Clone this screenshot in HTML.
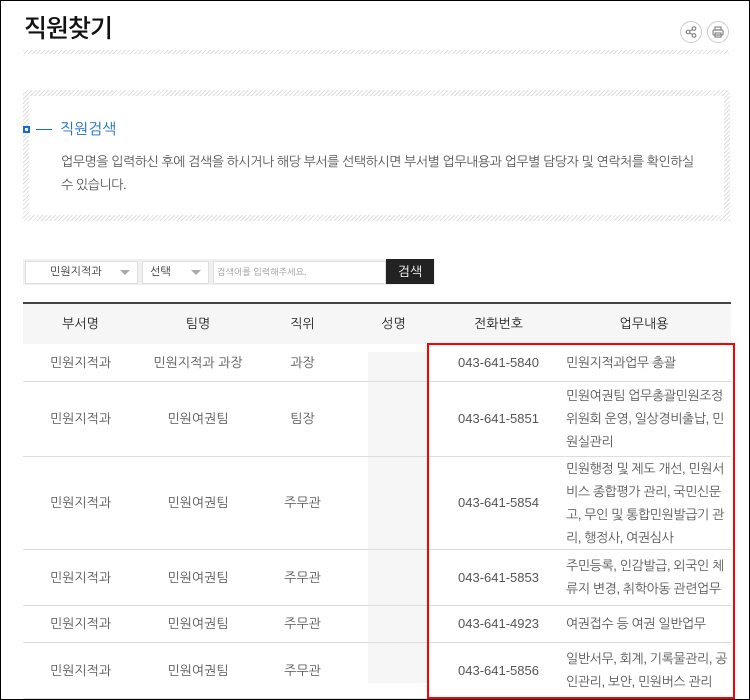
<!DOCTYPE html>
<html><head><meta charset="utf-8"><style>
*{box-sizing:border-box;margin:0;padding:0}
body{width:750px;height:700px;background:#fff;font-family:"Liberation Sans","NanumGothic","Noto Sans CJK KR",sans-serif;color:#555;position:relative;overflow:hidden}
.frame{position:absolute;left:0;top:0;width:750px;height:700px;border:1px solid #000;z-index:5;pointer-events:none}
.hatch{background:repeating-linear-gradient(135deg,#ddd 0 1px,#fff 1px 3px)}
h1{position:absolute;left:24px;top:10px;font-size:25px;font-weight:500;color:#111;letter-spacing:-1px;font-family:"Noto Sans CJK KR",sans-serif;line-height:34px}
.ic{position:absolute;top:21px;width:22px;height:22px;border:1px solid #ccc;border-radius:50%}
.line1{position:absolute;left:23px;top:50px;width:706px;height:4px}
.box{position:absolute;left:23px;top:90px;width:707px;height:131px}
.inner{position:absolute;left:6px;top:6px;right:6px;bottom:6px;background:#fff}
.tt{position:absolute;left:23px;top:120px;font-size:15px;color:#1a6bc9}
.desc{position:absolute;left:61px;top:150px;width:660px;font-size:13px;line-height:23px;color:#555;white-space:nowrap;letter-spacing:-0.45px}
.sb{position:absolute;left:23px;top:259px;width:412px;height:26px;background:#f0f0f0}
.sel{position:absolute;top:261px;height:23px;background:#fff;border:1px solid #ddd;font-size:11px;color:#333;line-height:21px}
.arr{position:absolute;right:7px;top:8px;border-left:5px solid transparent;border-right:5px solid transparent;border-top:5px solid #aaa}
table{position:absolute;left:23px;top:302px;width:708px;border-collapse:collapse;font-size:13px;table-layout:fixed}
th{height:41px;background:#f6f6f6;border-top:2px solid #444;font-weight:normal;color:#222;font-size:13px}
td{border-bottom:1px solid #ddd;text-align:center;line-height:23px;color:#555;padding:0;white-space:nowrap}
td.c{text-align:left;padding:0 0 0 9px;letter-spacing:-0.4px}
</style></head><body>
<div class="frame"></div>
<h1>직원찾기</h1>
<div class="ic" style="left:680px"><svg width="20" height="20" viewBox="0 0 20 20"><g fill="none" stroke="#888" stroke-width="1.2"><circle cx="7" cy="10" r="1.8"/><circle cx="13" cy="6.5" r="1.8"/><circle cx="13" cy="13.5" r="1.8"/><path d="M8.6 9.1l2.8-1.7M8.6 10.9l2.8 1.7"/></g></svg></div>
<div class="ic" style="left:707px"><svg width="20" height="20" viewBox="0 0 20 20"><g fill="none" stroke="#888" stroke-width="1.2"><rect x="7" y="5" width="6" height="3"/><rect x="5" y="8" width="10" height="5" rx="1"/><rect x="7" y="11" width="6" height="4"/></g></svg></div>
<div class="line1 hatch"></div>
<div class="box hatch"><div class="inner"></div></div>
<div class="tt"><span style="display:inline-block;width:7px;height:7px;border:2px solid #1a6bc9;vertical-align:1px"></span><span style="display:inline-block;width:16px;height:1px;background:#1a6bc9;vertical-align:4px;margin:0 8px 0 6px"></span>직원검색</div>
<div class="desc">업무명을 입력하신 후에 검색을 하시거나 해당 부서를 선택하시면 부서별 업무내용과 업무별 담당자 및 연락처를 확인하실<br>수 있습니다.</div>
<div class="sb"></div>
<div class="sel" style="left:25px;width:113px;padding-left:24px">민원지적과<span class="arr"></span></div>
<div class="sel" style="left:142px;width:67px;padding-left:7px">선택<span class="arr"></span></div>
<div class="sel" style="left:213px;width:173px;padding-left:3px;font-size:9px;color:#999">검색어를 입력해주세요.</div>
<div style="position:absolute;left:386px;top:259px;width:48px;height:25px;background:#222;color:#fff;font-size:13px;text-align:center;line-height:25px">검색</div>
<div style="position:absolute;left:368px;top:352px;width:60px;height:331px;background:#f6f6f6"></div>
<table>
<colgroup><col style="width:115px"><col style="width:120px"><col style="width:89px"><col style="width:93px"><col style="width:117px"><col style="width:174px"></colgroup>
<tr><th>부서명</th><th>팀명</th><th>직위</th><th>성명</th><th>전화번호</th><th>업무내용</th></tr>
<tr style="height:37px"><td>민원지적과</td><td>민원지적과 과장</td><td>과장</td><td></td><td>043-641-5840</td><td class="c">민원지적과업무 총괄</td></tr>
<tr style="height:75px"><td>민원지적과</td><td>민원여권팀</td><td>팀장</td><td></td><td>043-641-5851</td><td class="c">민원여권팀 업무총괄민원조정<br>위원회 운영, 일상경비출납, 민<br>원실관리</td></tr>
<tr style="height:93px"><td>민원지적과</td><td>민원여권팀</td><td>주무관</td><td></td><td>043-641-5854</td><td class="c">민원행정 및 제도 개선, 민원서<br>비스 종합평가 관리, 국민신문<br>고, 무인 및 통합민원발급기 관<br>리, 행정사, 여권심사</td></tr>
<tr style="height:56px"><td>민원지적과</td><td>민원여권팀</td><td>주무관</td><td></td><td>043-641-5853</td><td class="c">주민등록, 인감발급, 외국인 체<br>류지 변경, 취학아동 관련업무</td></tr>
<tr style="height:37px"><td>민원지적과</td><td>민원여권팀</td><td>주무관</td><td></td><td>043-641-4923</td><td class="c">여권접수 등 여권 일반업무</td></tr>
<tr style="height:56px"><td>민원지적과</td><td>민원여권팀</td><td>주무관</td><td></td><td>043-641-5856</td><td class="c">일반서무, 회계, 기록물관리, 공<br>인관리, 보안, 민원버스 관리</td></tr>
</table>
<div style="position:absolute;left:427px;top:343px;width:308px;height:356px;border:2px solid #f00;z-index:4"></div>
</body></html>
